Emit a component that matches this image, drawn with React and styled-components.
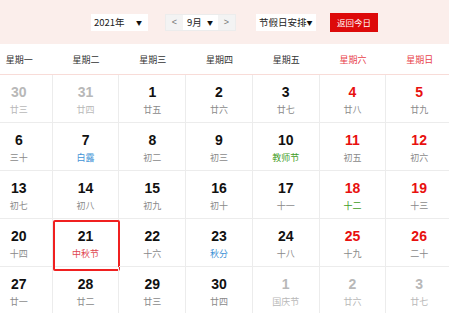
import React from "react";
import styled, { createGlobalStyle } from "styled-components";

const GlobalStyle = createGlobalStyle`
  body {
    margin: 0;
    background: #fff;
    overflow: hidden;
    font-family: "Liberation Sans", "Noto Sans CJK SC", sans-serif;
  }
`;

const weekdays = ["星期一", "星期二", "星期三", "星期四", "星期五", "星期六", "星期日"];

// [day, lunar, kind, lunarTone]
const days = [
  ["30", "廿三", "other"], ["31", "廿四", "other"], ["1", "廿五"], ["2", "廿六"], ["3", "廿七"], ["4", "廿八", "weekend"], ["5", "廿九", "weekend"],
  ["6", "三十"], ["7", "白露", null, "term"], ["8", "初二"], ["9", "初三"], ["10", "教师节", null, "fest"], ["11", "初五", "weekend"], ["12", "初六", "weekend"],
  ["13", "初七"], ["14", "初八"], ["15", "初九"], ["16", "初十"], ["17", "十一"], ["18", "十二", "weekend", "fest"], ["19", "十三", "weekend"],
  ["20", "十四"], ["21", "中秋节", "today", "holiday"], ["22", "十六"], ["23", "秋分", null, "term"], ["24", "十八"], ["25", "十九", "weekend"], ["26", "二十", "weekend"],
  ["27", "廿一"], ["28", "廿二"], ["29", "廿三"], ["30", "廿四"], ["1", "国庆节", "other"], ["2", "廿六", "other"], ["3", "廿七", "other"],
];

const dayColors = { other: "#b8b8b8", weekend: "#e8100f", today: "#111", default: "#111" };
const lunarColors = { term: "#3f93d6", fest: "#3f9d25", holiday: "#e0464f", default: "#8a8a8a" };

const Page = styled.div`
  width: 449px;
  height: 313px;
  overflow: hidden;
`;

const Toolbar = styled.div`
  height: 44px;
  background: #fbeeeb;
  display: flex;
  align-items: center;
  padding-left: 91px;
  box-sizing: border-box;
`;

const Select = styled.div`
  flex-shrink: 0;
  width: ${(p) => p.w}px;
  height: 17px;
  margin-right: ${(p) => p.gap || 0}px;
  background: #fff;
  display: flex;
  align-items: center;
  justify-content: space-between;
  padding: 0 6px 0 3px;
  box-sizing: border-box;
  white-space: nowrap;
  font-family: "Noto Sans CJK SC", sans-serif;
  font-size: 9.5px;
  color: #222;
  &::after {
    content: "▼";
    font-size: 6px;
    color: #111;
  }
`;

const MonthGroup = styled.div`
  flex-shrink: 0;
  display: flex;
  margin-right: 20px;
  border: 1px solid #ececec;
  height: 17px;
  box-sizing: border-box;
  background: #fff;
`;

const Arrow = styled.div`
  width: 17px;
  background: #f3f3f3;
  color: #777;
  font-size: 9px;
  display: flex;
  align-items: center;
  justify-content: center;
  font-family: "Liberation Sans", sans-serif;
`;

const MonthSelect = styled(Select)`
  height: 15px;
  margin: 0;
  padding: 0 5px 0 4px;
`;

const TodayButton = styled.div`
  flex-shrink: 0;
  width: 48px;
  height: 19px;
  background: #dd0a0a;
  color: #fff;
  font-family: "Noto Sans CJK SC", sans-serif;
  font-size: 8.5px;
  display: flex;
  align-items: center;
  justify-content: center;
`;

const Grid = styled.div`
  margin-left: -14px;
  width: 467px;
  display: grid;
  grid-template-columns: repeat(7, 1fr);
`;

const Weekday = styled.div`
  height: 30px;
  display: flex;
  align-items: center;
  justify-content: center;
  font-family: "Noto Sans CJK SC", sans-serif;
  font-size: 9px;
  color: ${(p) => (p.weekend ? "#e8414b" : "#333")};
  border-bottom: 1px solid #f8dcd8;
`;

const Cell = styled.div`
  position: relative;
  height: 48px;
  box-sizing: border-box;
  border-right: 1px solid #ececec;
  border-bottom: 1px solid #ececec;
  display: flex;
  flex-direction: column;
  align-items: center;
  padding-top: 9px;
`;

const TodayFrame = styled.div`
  position: absolute;
  left: 0;
  top: 1px;
  right: -2px;
  bottom: -5px;
  border: 2px solid #f02020;
  border-radius: 2px;
`;

const DayNum = styled.div`
  font-family: "Liberation Sans", sans-serif;
  font-weight: bold;
  font-size: 14px;
  line-height: 16px;
  color: ${(p) => dayColors[p.kind] || dayColors.default};
`;

const Lunar = styled.div`
  margin-top: 4px;
  font-family: "Noto Sans CJK SC", sans-serif;
  font-size: 9px;
  line-height: 12px;
  color: ${(p) => (p.faded ? "#b8b8b8" : lunarColors[p.tone] || lunarColors.default)};
`;

export default function App() {
  return (
    <Page>
      <GlobalStyle />
      <Toolbar>
        <Select w={57} gap={17}>2021年</Select>
        <MonthGroup>
          <Arrow>&lt;</Arrow>
          <MonthSelect w={35}>9月</MonthSelect>
          <Arrow>&gt;</Arrow>
        </MonthGroup>
        <Select w={60} gap={14}>节假日安排</Select>
        <TodayButton>返回今日</TodayButton>
      </Toolbar>
      <Grid>
        {weekdays.map((w, i) => (
          <Weekday key={w} weekend={i >= 5}>{w}</Weekday>
        ))}
        {days.map(([d, l, kind, tone], i) => (
          <Cell key={i}>
            {kind === "today" && <TodayFrame />}
            <DayNum kind={kind}>{d}</DayNum>
            <Lunar tone={tone} faded={kind === "other"}>{l}</Lunar>
          </Cell>
        ))}
      </Grid>
    </Page>
  );
}
